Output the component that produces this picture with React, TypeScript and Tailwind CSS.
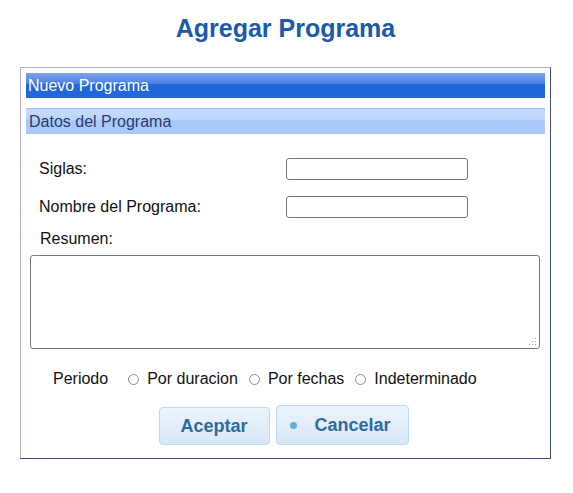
const font = "font-['Liberation_Sans',Arial,sans-serif]";

function Radio({ label, className }: { label: string; className?: string }) {
    return (
        <label className={`flex items-center ${className ?? ""}`}>
            <span className="w-[11px] h-[11px] rounded-full border border-[#8c8c8c] bg-white" />
            <span className="ml-[8px]">{label}</span>
        </label>
    );
}

function Grip() {
    const dots = [
        [8, 0],
        [8, 3],
        [5, 3],
        [8, 6],
        [5, 6],
        [2, 6],
    ];
    return (
        <svg width="10" height="8" className="absolute right-[3px] bottom-[3px]">
            {dots.map(([x, y]) => (
                <rect key={`${x}-${y}`} x={x} y={y} width="1" height="1" fill="#a0a0a0" />
            ))}
        </svg>
    );
}

const btn =
    "rounded-[4px] border border-[#c0d8ee] bg-[linear-gradient(#eaf4fe,#e2eefa_50%,#d8e8f6)] text-[18px] font-bold text-[#2e6aa1]";

export default function App() {
    return (
        <div className={`w-[573px] h-[493px] bg-white ${font} text-[#111]`}>
            <h1 className="pt-[14px] pr-[2px] text-center text-[25px] leading-[28px] font-bold text-[#1a5aa8]">
                Agregar Programa
            </h1>

            <div className="mt-[25px] mx-[20px] w-[531px] border border-t-[#b3acdf] border-l-[#b3acdf] border-r-[#3f4c7c] border-b-[#3f4c7c] px-[5px] pt-[5px] pb-[13px] text-[16px]">
                <div className="h-[25px] flex items-center px-[2px] text-white bg-[linear-gradient(#7da4ec,#4a80e4_44%,#2266dd_46%,#2266dd)]">
                    Nuevo Programa
                </div>
                <div className="mt-[10px] h-[26px] flex items-center px-[3px] text-[#2a3a6e] bg-[linear-gradient(#c6dcfd,#bcd4fb_42%,#a9c9fa_46%,#a9c9fa)] border-t border-[#9ec0f5]">
                    Datos del Programa
                </div>

                <div className="mt-[24px] flex items-center h-[22px]">
                    <span className="w-[260px] pl-[13px]">Siglas:</span>
                    <input className="w-[182px] h-[22px] rounded-[3px] border border-[#777] bg-white" />
                </div>
                <div className="mt-[16px] flex items-center h-[22px]">
                    <span className="w-[260px] pl-[13px]">Nombre del Programa:</span>
                    <input className="w-[182px] h-[22px] rounded-[3px] border border-[#777] bg-white" />
                </div>
                <div className="mt-[11px] pl-[14px] leading-[20px]">Resumen:</div>

                <div className="relative mt-[6px] ml-[4px] w-[510px] h-[94px]">
                    <textarea className="w-full h-full resize-none rounded-[3px] border border-[#777] bg-white" />
                    <Grip />
                </div>

                <div className="mt-[20px] ml-[27px] flex items-center h-[20px]">
                    <span>Periodo</span>
                    <Radio label="Por duracion" className="ml-[20px]" />
                    <Radio label="Por fechas" className="ml-[11px]" />
                    <Radio label="Indeterminado" className="ml-[11px]" />
                </div>

                <div className="mt-[16px] flex justify-center gap-[6px] pr-[4px]">
                    <button className={`w-[111px] h-[38px] mt-[2px] ${btn}`}>Aceptar</button>
                    <button className={`w-[133px] h-[40px] flex items-center pl-[13px] gap-[18px] ${btn}`}>
                        <span className="w-[7px] h-[7px] rounded-full bg-[#6aaad8]" />
                        Cancelar
                    </button>
                </div>
            </div>
        </div>
    );
}
